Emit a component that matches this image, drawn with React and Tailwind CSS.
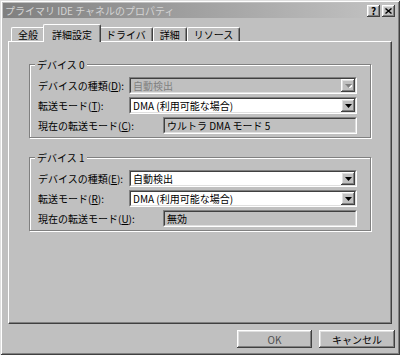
import React from "react";

const font = { fontFamily: '"Noto Sans CJK JP", "Noto Sans", sans-serif' };

const raised =
  "shadow-[inset_-1px_-1px_#404040,inset_1px_1px_#ffffff,inset_-2px_-2px_#808080,inset_2px_2px_#dfdfdf]";

function Arrow({ disabled }) {
  return (
    <svg width="7" height="4" viewBox="0 0 7 4" className="block">
      {disabled ? <polygon points="1,1 8,1 4.5,5" fill="#ffffff" /> : null}
      <polygon points="0,0 7,0 3.5,4" fill={disabled ? "#808080" : "#000000"} />
    </svg>
  );
}

function Sunken({ className, inner, children }) {
  return (
    <div
      className={`border border-t-[#808080] border-l-[#808080] border-b-white border-r-white ${className}`}
    >
      <div
        className={`h-full border border-t-[#404040] border-l-[#404040] border-b-[#dfdfdf] border-r-[#dfdfdf] flex items-center ${inner}`}
      >
        {children}
      </div>
    </div>
  );
}

function Combo({ value, disabled }) {
  return (
    <Sunken
      className="w-[228px] h-[17px]"
      inner={disabled ? "bg-[#c0c0c0]" : "bg-white"}
    >
      <span
        className={`flex-1 pl-[2px] text-[10px] leading-[13px] whitespace-nowrap ${
          disabled ? "text-[#808080]" : "text-black"
        }`}
      >
        {value}
      </span>
      <div
        className={`w-[14px] h-full bg-[#c0c0c0] flex items-center justify-center ${raised}`}
      >
        <Arrow disabled={disabled} />
      </div>
    </Sunken>
  );
}

function ReadOnly({ value }) {
  return (
    <Sunken className="w-[194px] h-[17px]" inner="bg-[#c0c0c0]">
      <span className="pl-[2px] text-[10px] leading-[13px] whitespace-nowrap text-black">
        {value}
      </span>
    </Sunken>
  );
}

function Label({ text, k }) {
  return (
    <span className="text-[10px] leading-[13px] whitespace-nowrap">
      {text}(<span className="underline">{k}</span>):
    </span>
  );
}

function Row({ label, k, children }) {
  return (
    <div className="flex items-center h-[17px] pl-[8px] pr-[13px]">
      <Label text={label} k={k} />
      <div className="ml-auto">{children}</div>
    </div>
  );
}

function Group({ title, children, className }) {
  return (
    <div
      className={`relative mx-[20px] border border-[#808080] shadow-[inset_1px_1px_#ffffff,1px_1px_#ffffff] pt-[12px] pb-[3px] flex flex-col gap-[3px] ${className}`}
    >
      <span className="absolute -top-[7px] left-[5px] px-[2px] bg-[#c0c0c0] text-[10px] leading-[13px]">
        {title}
      </span>
      {children}
    </div>
  );
}

function Tab({ label, active }) {
  return (
    <div
      className={`relative bg-[#c0c0c0] rounded-t-[2px] border-t border-l border-t-white border-l-white shadow-[inset_-1px_0_#808080] border-r border-r-[#404040] text-[10px] leading-[13px] whitespace-nowrap ${
        active
          ? "h-[18px] -mx-[2px] px-[8px] pt-[3px] z-10 -mb-[1px]"
          : "h-[14px] mt-[3px] px-[6px] pt-[0px]"
      }`}
    >
      {label}
    </div>
  );
}

function Button({ children, className }) {
  return (
    <div
      className={`h-[18px] bg-[#c0c0c0] flex items-center justify-center text-[10px] leading-[13px] ${raised} ${className}`}
    >
      {children}
    </div>
  );
}

export default function App() {
  return (
    <div
      style={font}
      className="w-[400px] h-[355px] bg-[#c0c0c0] text-black flex flex-col p-[3px] shadow-[inset_1px_1px_#dfdfdf,inset_-1px_-1px_#404040,inset_2px_2px_#ffffff,inset_-2px_-2px_#808080]"
    >
      <div className="h-[15px] bg-linear-to-r from-[#808080] to-[#c4c4c4] flex items-center pl-[2px] pr-[2px]">
        <span className="text-[10px] leading-[13px] text-[#d4d4d4] whitespace-nowrap">
          プライマリ IDE チャネルのプロパティ
        </span>
        <div className="ml-auto flex gap-[2px]">
          <div
            className={`w-[13px] h-[12px] bg-[#c0c0c0] flex items-center justify-center text-[10px] leading-[10px] font-bold ${raised}`}
          >
            ?
          </div>
          <div
            className={`w-[13px] h-[12px] bg-[#c0c0c0] flex items-center justify-center ${raised}`}
          >
            <svg width="7" height="6" viewBox="0 0 7 6">
              <path d="M0.5 0.5 L6.5 5.5 M6.5 0.5 L0.5 5.5" stroke="#000" strokeWidth="1.4" />
            </svg>
          </div>
        </div>
      </div>

      <div className="flex items-end pl-[8px] mt-[6px] h-[17px]">
        <Tab label="全般" />
        <Tab label="詳細設定" active />
        <Tab label="ドライバ" />
        <Tab label="詳細" />
        <Tab label="リソース" />
      </div>

      <div className="mx-[5px] h-[283px] border-t border-l border-t-white border-l-white border-r border-b border-r-[#404040] border-b-[#404040] shadow-[inset_-1px_-1px_#808080] flex flex-col pt-[22px]">
        <Group title="デバイス 0">
          <Row label="デバイスの種類" k="D">
            <Combo value="自動検出" disabled />
          </Row>
          <Row label="転送モード" k="T">
            <Combo value="DMA (利用可能な場合)" />
          </Row>
          <Row label="現在の転送モード" k="C">
            <ReadOnly value="ウルトラ DMA モード 5" />
          </Row>
        </Group>
        <Group title="デバイス 1" className="mt-[19px]">
          <Row label="デバイスの種類" k="E">
            <Combo value="自動検出" />
          </Row>
          <Row label="転送モード" k="R">
            <Combo value="DMA (利用可能な場合)" />
          </Row>
          <Row label="現在の転送モード" k="U">
            <ReadOnly value="無効" />
          </Row>
        </Group>
      </div>

      <div className="flex justify-end gap-[7px] mt-[6px] pr-[2px]">
        <Button className="w-[75px] text-[#505050]">OK</Button>
        <Button className="w-[76px]">キャンセル</Button>
      </div>
    </div>
  );
}
